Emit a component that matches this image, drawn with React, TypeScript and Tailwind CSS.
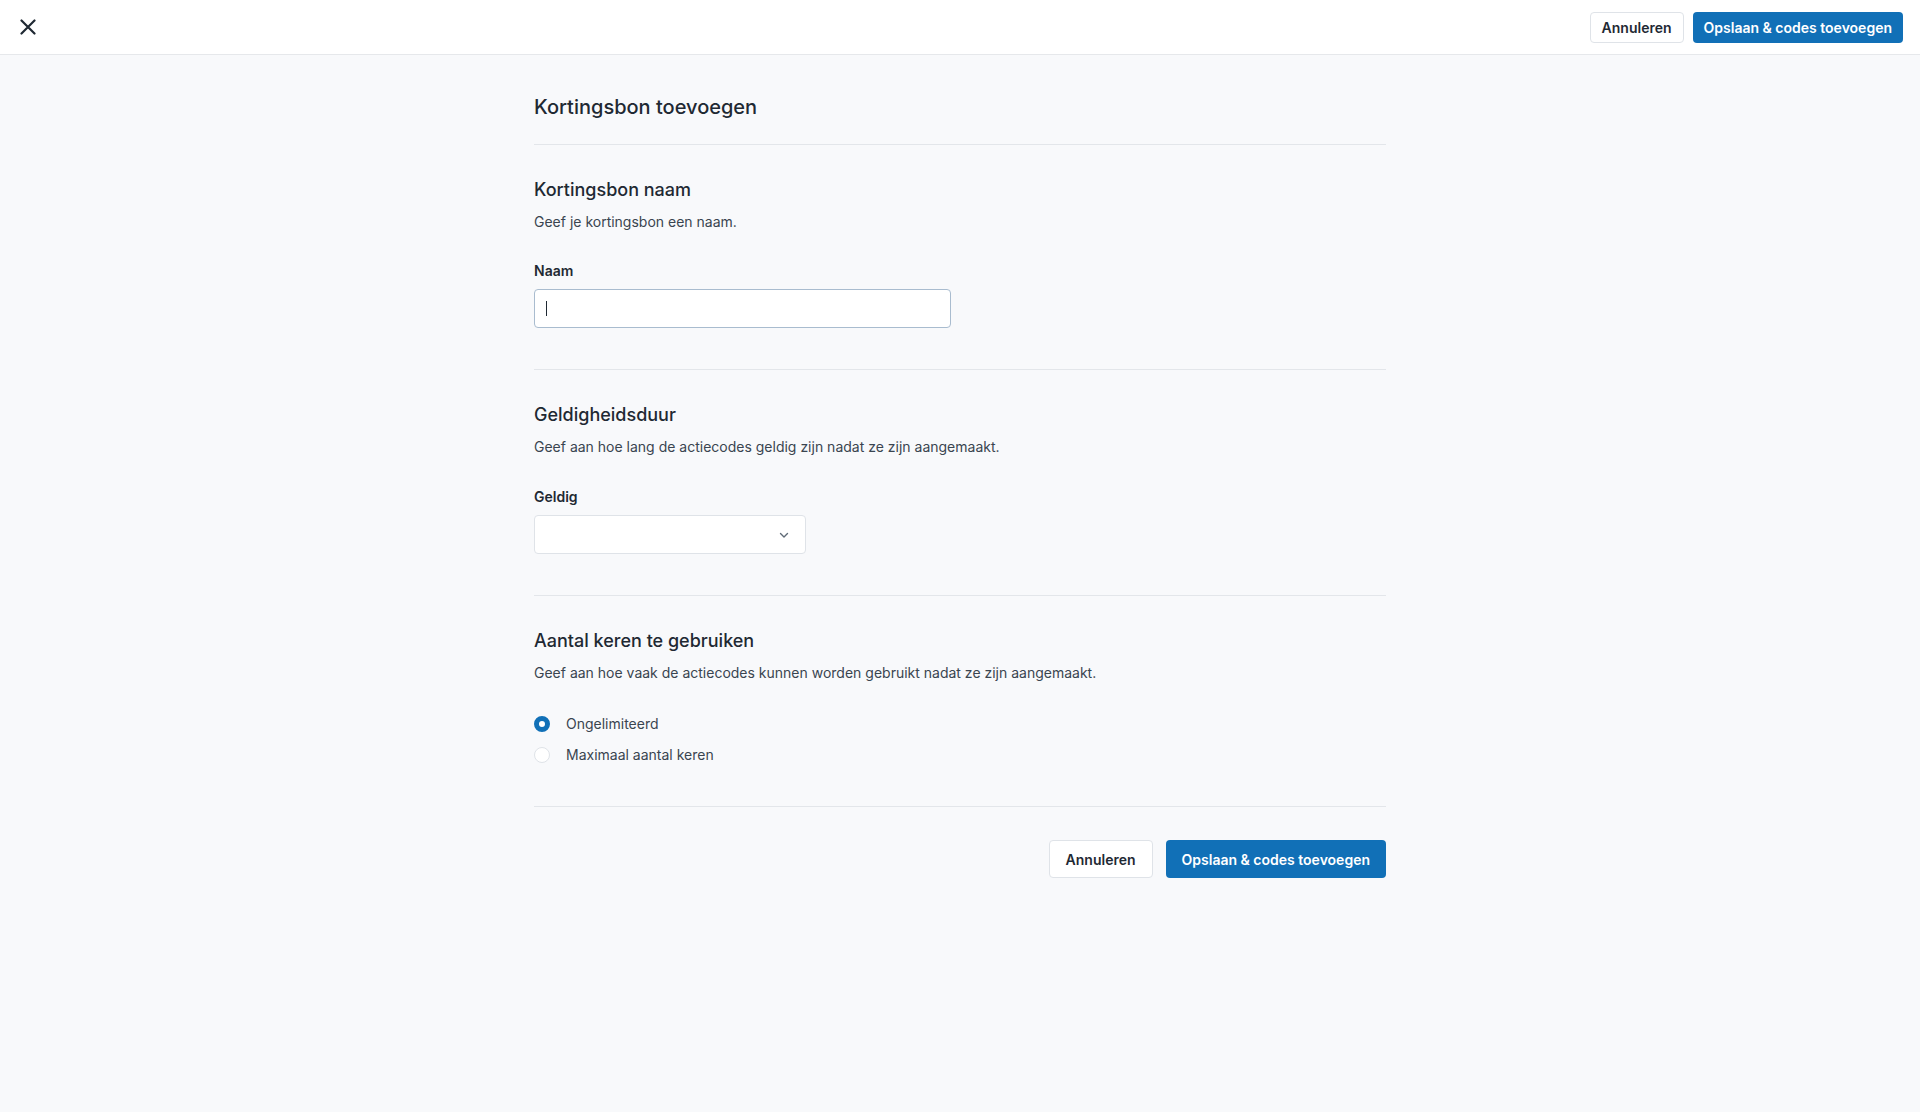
import { useState } from 'react'

function Chevron() {
  return (
    <svg width="12" height="12" viewBox="0 0 12 12" fill="none" className="text-[#5f6b77]">
      <path d="M2.5 4.5 6 8l3.5-3.5" stroke="currentColor" strokeWidth="1.4" strokeLinecap="round" strokeLinejoin="round" />
    </svg>
  )
}

function Radio({ checked, label, onClick }: { checked: boolean; label: string; onClick: () => void }) {
  return (
    <label onClick={onClick} className="flex items-center gap-4 h-5 cursor-pointer">
      <span
        className={
          checked
            ? 'w-4 h-4 rounded-full border-[5px] border-[#1170b7] bg-white'
            : 'w-4 h-4 rounded-full border border-[#dfe3e8] bg-white'
        }
      />
      <span className="text-[14px] leading-5 text-[#3a4550]">{label}</span>
    </label>
  )
}

function Section({ title, desc, children }: { title: string; desc: string; children: React.ReactNode }) {
  return (
    <section className="pt-[32px] pb-[41px] border-b border-[#e3e6ea]">
      <h2 className="text-[18px] leading-[26px] font-medium text-[#1f2933]">{title}</h2>
      <p className="mt-[9px] text-[14px] leading-5 text-[#3a4550]">{desc}</p>
      {children}
    </section>
  )
}

export default function App() {
  const [usage, setUsage] = useState<'unlimited' | 'max'>('unlimited')
  const [name, setName] = useState('')

  return (
    <div className="min-h-screen bg-[#f8f9fb] text-[#1f2933]" style={{ fontFamily: 'Inter, "Noto Sans", sans-serif' }}>
      {/* Top bar */}
      <header className="h-[55px] bg-white border-b border-[#e6e8eb] flex items-center justify-between pl-5 pr-[17px]">
        <button className="w-4 h-4 flex items-center justify-center text-[#1f2933]">
          <svg width="16" height="16" viewBox="0 0 16 16" fill="none">
            <path d="M1.5 1.5l13 13M14.5 1.5l-13 13" stroke="currentColor" strokeWidth="2.2" strokeLinecap="round" />
          </svg>
        </button>
        <div className="flex items-center gap-[9px]">
          <button className="h-[31px] px-[11px] rounded-[4px] border border-[#dfe3e8] bg-white text-[14px] font-semibold text-[#1f2933]">
            Annuleren
          </button>
          <button className="h-[31px] px-[11px] rounded-[4px] bg-[#1170b7] text-[14px] font-semibold text-white">
            Opslaan &amp; codes toevoegen
          </button>
        </div>
      </header>

      <main className="w-[852px] mx-auto">
        <div className="pt-[38px] pb-[23px] border-b border-[#e3e6ea]">
          <h1 className="text-[20px] leading-7 font-medium text-[#1f2933]">Kortingsbon toevoegen</h1>
        </div>

        <Section title="Kortingsbon naam" desc="Geef je kortingsbon een naam.">
          <div className="mt-[29px] text-[14px] leading-5 font-semibold text-[#1f2933]">Naam</div>
          <div className="relative mt-2 w-[417px]">
            <input
              value={name}
              onChange={e => setName(e.target.value)}
              className="w-full h-[39px] rounded-[4px] border border-[#a9bccf] bg-white px-3 text-[14px] outline-none caret-transparent"
            />
            {name === '' && (
              <span className="pointer-events-none absolute left-3 top-[12px] w-px h-[15px] bg-[#1f2933]" />
            )}
          </div>
        </Section>

        <Section title="Geldigheidsduur" desc="Geef aan hoe lang de actiecodes geldig zijn nadat ze zijn aangemaakt.">
          <div className="mt-[30px] text-[14px] leading-5 font-semibold text-[#1f2933]">Geldig</div>
          <div className="mt-2 w-[272px] h-[39px] rounded-[4px] border border-[#dfe3e8] bg-white flex items-center justify-end pr-[15px]">
            <Chevron />
          </div>
        </Section>

        <Section title="Aantal keren te gebruiken" desc="Geef aan hoe vaak de actiecodes kunnen worden gebruikt nadat ze zijn aangemaakt.">
          <div className="mt-[31px] flex flex-col gap-[11px]">
            <Radio checked={usage === 'unlimited'} label="Ongelimiteerd" onClick={() => setUsage('unlimited')} />
            <Radio checked={usage === 'max'} label="Maximaal aantal keren" onClick={() => setUsage('max')} />
          </div>
        </Section>

        <div className="pt-[33px] flex justify-end gap-[13px]">
          <button className="h-[38px] px-4 rounded-[4px] border border-[#dfe3e8] bg-white text-[14px] font-semibold text-[#1f2933]">
            Annuleren
          </button>
          <button className="h-[38px] px-4 rounded-[4px] bg-[#1170b7] text-[14px] font-semibold text-white">
            Opslaan &amp; codes toevoegen
          </button>
        </div>
      </main>
    </div>
  )
}
